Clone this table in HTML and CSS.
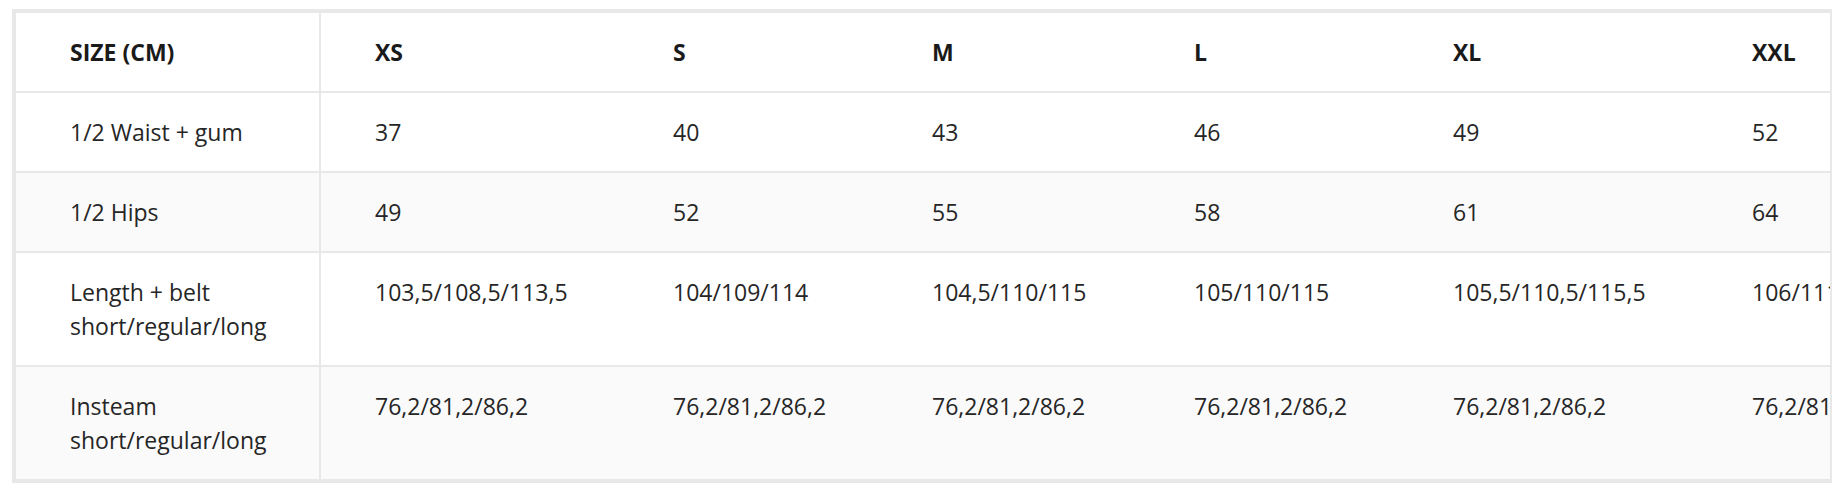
FILE: index.html
```html
<!DOCTYPE html>
<html lang="en">
<head>
<meta charset="utf-8">
<title>Size chart</title>
<link rel="stylesheet" href="styles.css">
</head>
<body>
<div class="page">
  <div class="chart-scroll">
    <table class="chart">
      <colgroup>
        <col class="c-label">
        <col class="c-wide">
        <col class="c-mid">
        <col class="c-mid2">
        <col class="c-mid">
        <col class="c-wide2">
        <col class="c-mid">
      </colgroup>
      <thead>
        <tr>
          <th class="label">SIZE (CM)</th>
          <th>XS</th>
          <th>S</th>
          <th>M</th>
          <th>L</th>
          <th>XL</th>
          <th>XXL</th>
        </tr>
      </thead>
      <tbody>
        <tr>
          <td class="label">1/2 Waist + gum</td>
          <td>37</td><td>40</td><td>43</td><td>46</td><td>49</td><td>52</td>
        </tr>
        <tr class="alt">
          <td class="label">1/2 Hips</td>
          <td>49</td><td>52</td><td>55</td><td>58</td><td>61</td><td>64</td>
        </tr>
        <tr>
          <td class="label">Length + belt<br>short/regular/long</td>
          <td>103,5/108,5/113,5</td><td>104/109/114</td><td>104,5/110/115</td><td>105/110/115</td><td>105,5/110,5/115,5</td><td>106/111/116</td>
        </tr>
        <tr class="alt last">
          <td class="label">Insteam<br>short/regular/long</td>
          <td>76,2/81,2/86,2</td><td>76,2/81,2/86,2</td><td>76,2/81,2/86,2</td><td>76,2/81,2/86,2</td><td>76,2/81,2/86,2</td><td>76,2/81,2/86,2</td>
        </tr>
      </tbody>
    </table>
  </div>
</div>
</body>
</html>
```

FILE: styles.css
```css
html, body {
  margin: 0;
  padding: 0;
  background: #ffffff;
}

.page {
  padding: 9px 14px 0 12px;
  font-family: "Open Sans", "Noto Sans", "Liberation Sans", sans-serif;
}

.chart-scroll {
  border: 2px solid #e8e8e8;
  overflow: hidden;
}

.chart {
  border-collapse: separate;
  border-spacing: 0;
  table-layout: fixed;
  width: 1945px;
  border: 2px solid #e8e8e8;
  font-size: 23px;
  line-height: 34px;
  color: #262626;
}

.c-label { width: 305px; }
.c-wide { width: 298px; }
.c-mid { width: 259px; }
.c-mid2 { width: 262px; }
.c-wide2 { width: 299px; }

.chart th,
.chart td {
  padding: 22px 20px 22px 54px;
  text-align: left;
  vertical-align: top;
  border-bottom: 2px solid #e8e8e8;
  white-space: nowrap;
  overflow: hidden;
}

.chart th {
  font-weight: 700;
  color: #1a1a1a;
}

.chart .label {
  border-right: 2px solid #e8e8e8;
}

.chart tr.alt td {
  background: #fafafa;
}

.chart tr.last td {
  border-bottom: none;
}
```
